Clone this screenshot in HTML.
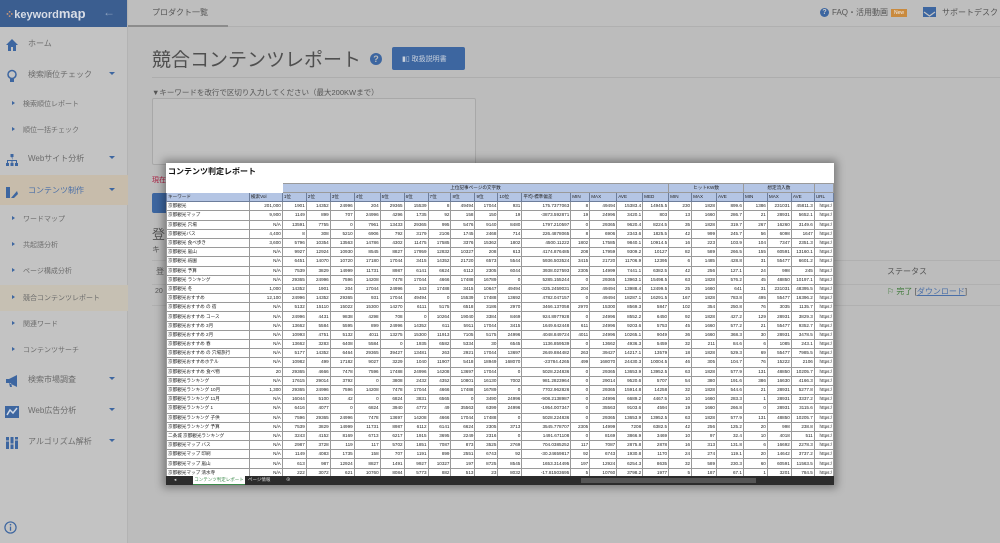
<!DOCTYPE html>
<html><head><meta charset="utf-8">
<style>
*{margin:0;padding:0;box-sizing:border-box}
body{width:1000px;height:543px;overflow:hidden;background:#bcbcbc;font-family:"Liberation Sans","Noto Sans CJK JP",sans-serif;color:#5e5e5e;position:relative}
.sb{position:absolute;left:0;top:0;width:128px;height:543px;background:#c3c3c3;border-right:1px solid #b3b3b3}
.logo{height:27px;background:#3b5e90;color:#d8dde6;font-size:11px;font-weight:bold;padding:6px 0 0 5px;position:relative}
.logo b{font-size:13px}
.logo .ar{position:absolute;right:12px;top:5px;color:#8ea2bf;font-size:12px;font-weight:normal}
.it{position:absolute;left:0;width:128px;font-size:8px;color:#6c6c6c}
.it .ic{position:absolute;left:5px;top:-5px;width:14px;height:14px}
.it .tx{position:absolute;left:28px;top:-5px}
.it .dd{position:absolute;left:109px;top:-2px;border-left:3px solid transparent;border-right:3px solid transparent;border-top:3px solid #3d66a0}
.sub .tx{left:23px;font-size:7px}
.sub .tri{position:absolute;left:12px;top:-3px;border-top:2.5px solid transparent;border-bottom:2.5px solid transparent;border-left:3px solid #3d66a0}
.hl{position:absolute;left:0;width:128px;background:#c7bcab}
.top{position:absolute;left:129px;top:0;right:0;height:27px;border-bottom:1px solid #b0b0b0;background:#bebebe}
.tab{position:absolute;left:152px;top:7px;font-size:8px;color:#555}
.tabu{position:absolute;left:128px;top:25px;width:100px;height:2px;background:#8c8c8c}
.main{position:absolute}
.sheet{position:absolute;left:166px;top:163px;width:668px;height:322px;background:#fff;box-shadow:0 0 8px 3px rgba(0,0,0,.35);overflow:hidden}
table{border-collapse:collapse;table-layout:fixed;font-size:4.6px;position:absolute;left:0;top:0}
td{border:0.5px solid #9a9a9a;height:9.2px;overflow:hidden;white-space:nowrap;text-align:right;padding:0 1px;color:#222;line-height:8px}
td.k{text-align:left}
tr.h td{background:#b4c5e4;text-align:left;border-color:#6d7e9c}
.gh td{background:#b4c5e4;text-align:center;height:9px}
.bar{position:absolute;left:0;top:313px;width:668px;height:9px;background:#2c2c2c;font-size:4.5px;color:#ddd}
</style></head><body>

<div class="sb">
 <div class="logo"><span style="color:#c97">⁘</span>keyword<b>map</b><span class="ar">←</span></div>
 <div class="hl" style="top:175px;height:30px"></div>
 <div class="hl" style="top:285px;height:26px;background:#c6c0b3"></div>
 <div class="it" style="top:43px"><svg class="ic" viewBox="0 0 14 14"><path d="M1 7 L7 1 L13 7 L11 7 L11 13 L8 13 L8 9 L6 9 L6 13 L3 13 L3 7Z" fill="#3d66a0"/></svg><span class="tx">ホーム</span></div>
 <div class="it" style="top:74px"><svg class="ic" viewBox="0 0 14 14"><circle cx="7" cy="5.5" r="4" fill="none" stroke="#3d66a0" stroke-width="1.5"/><rect x="5" y="10" width="4" height="3" fill="#3d66a0"/></svg><span class="tx">検索順位チェック</span><span class="dd"></span></div>
 <div class="it sub" style="top:104px"><span class="tri"></span><span class="tx">検索順位レポート</span></div>
 <div class="it sub" style="top:130px"><span class="tri"></span><span class="tx">順位一括チェック</span></div>
 <div class="it" style="top:158px"><svg class="ic" viewBox="0 0 14 14"><path d="M5.5 1h3v3h-3zM6.5 4h1v3H2v3h1V8h3.5v2h1V8H11v2h1V7H7.5z M1 10h3v3H1zM5.5 10h3v3h-3zM10 10h3v3h-3z" fill="#3d66a0"/></svg><span class="tx">Webサイト分析</span><span class="dd"></span></div>
 <div class="it" style="top:190px"><svg class="ic" viewBox="0 0 14 14"><path d="M1 2h4v11H1zM6 13 L12 6 L13 9 L9 13Z" fill="#3d66a0"/></svg><span class="tx" style="color:#4a6fa8">コンテンツ制作</span><span class="dd"></span></div>
 <div class="it sub" style="top:219px"><span class="tri"></span><span class="tx">ワードマップ</span></div>
 <div class="it sub" style="top:245px"><span class="tri"></span><span class="tx">共起語分析</span></div>
 <div class="it sub" style="top:271px"><span class="tri"></span><span class="tx">ページ構成分析</span></div>
 <div class="it sub" style="top:298px"><span class="tri"></span><span class="tx">競合コンテンツレポート</span></div>
 <div class="it sub" style="top:324px"><span class="tri"></span><span class="tx">関連ワード</span></div>
 <div class="it sub" style="top:350px"><span class="tri"></span><span class="tx">コンテンツサーチ</span></div>
 <div class="it" style="top:379px"><svg class="ic" viewBox="0 0 14 14"><path d="M1 5h3l8-4v12L4 9H1zM4 9l1 4h2L6 9z" fill="#3d66a0"/></svg><span class="tx">検索市場調査</span><span class="dd"></span></div>
 <div class="it" style="top:410px"><svg class="ic" viewBox="0 0 14 14"><rect x="0" y="1" width="14" height="12" fill="#3d66a0"/><path d="M2 10 L5 5 L8 8 L12 3" stroke="#cfd8e6" stroke-width="1.5" fill="none"/></svg><span class="tx">Web広告分析</span><span class="dd"></span></div>
 <div class="it" style="top:441px"><svg class="ic" viewBox="0 0 14 14"><path d="M1 1h3v12H1zM5.5 1h3v12h-3zM10 1h3v12h-3z" fill="#3d66a0"/><path d="M1 5h3M5.5 8h3M10 4h3" stroke="#c3c3c3"/></svg><span class="tx">アルゴリズム解析</span><span class="dd"></span></div>
 <svg style="position:absolute;left:4px;top:521px" width="13" height="13" viewBox="0 0 14 14"><circle cx="7" cy="7" r="6" fill="none" stroke="#3d66a0" stroke-width="1.3"/><rect x="6.3" y="6" width="1.4" height="4.5" fill="#3d66a0"/><circle cx="7" cy="4" r=".9" fill="#3d66a0"/></svg>
</div>

<div class="top"></div>
<div class="tab">プロダクト一覧</div>
<div class="tabu"></div>
<div class="main" style="left:820px;top:7px;font-size:8px;color:#555;display:flex;align-items:center;gap:3px">
 <span style="display:inline-block;width:9px;height:9px;border-radius:50%;background:#3d66a0;color:#ccc;font-size:7px;text-align:center;line-height:9px;font-weight:bold">?</span>FAQ・活用動画<span style="background:#c98a3e;color:#eee;font-size:5px;padding:1px 3px">New</span>
</div>
<div class="main" style="left:923px;top:7px;width:13px;height:10px;background:#3d66a0"><svg width="13" height="10"><path d="M1 2 L6.5 6 L12 2" stroke="#c3c3c3" fill="none" stroke-width="1.2"/></svg></div>
<div class="main" style="left:942px;top:7px;font-size:8px;color:#555">サポートデスク</div>

<div class="main" style="left:152px;top:45px;font-size:19px;color:#4f4f4f;white-space:nowrap">競合コンテンツレポート</div>
<div class="main" style="left:370px;top:53px;width:12px;height:12px;border-radius:50%;background:#3d66a0;color:#bbb;font-size:9px;font-weight:bold;text-align:center;line-height:12px">?</div>
<div class="main" style="left:392px;top:47px;width:73px;height:23px;background:#3d66a0;border-radius:2px;color:#c8d0dc;font-size:7px;padding:7px 0 0 10px">▮▯ 取扱説明書</div>
<div class="main" style="left:152px;top:77px;width:848px;height:1px;background:#adadad"></div>
<div class="main" style="left:152px;top:87px;font-size:7.5px;color:#555">▼キーワードを改行で区切り入力してください（最大200KWまで）</div>
<div class="main" style="left:152px;top:98px;width:324px;height:67px;border:1px solid #a8a8a8;border-radius:2px;background:#c0c0c0"></div>
<div class="main" style="left:152px;top:175px;font-size:7px;color:#a24">現在</div>
<div class="main" style="left:152px;top:193px;width:20px;height:20px;background:#3d66a0;border-radius:2px"></div>
<div class="main" style="left:152px;top:224px;font-size:13px;color:#555">登</div>
<div class="main" style="left:152px;top:244px;font-size:8px;color:#555">キ</div>
<div class="main" style="left:152px;top:260px;width:848px;height:1px;background:#b0b0b0"></div>
<div class="main" style="left:152px;top:284px;width:848px;height:1px;background:#b0b0b0"></div>
<div class="main" style="left:152px;top:305px;width:848px;height:1px;background:#b0b0b0"></div>
<div class="main" style="left:887px;top:266px;font-size:8px;color:#555">ステータス</div>
<div class="main" style="left:156px;top:266px;font-size:8px;color:#555">登</div>
<div class="main" style="left:155px;top:288px;font-size:7px;color:#555">20</div>
<div class="main" style="left:887px;top:286px;font-size:8px;color:#555"><span style="color:#3f7a3a">⚐ 完了</span> [<span style="text-decoration:underline;color:#4a6fa8">ダウンロード</span>]</div>

<div class="sheet">
<div style="position:absolute;left:2px;top:3px;font-size:8px;font-weight:bold;color:#111">コンテンツ判定レポート</div>
<table style="top:20px">
<colgroup><col style="width:83px"><col style="width:33px"><col style="width:24px"><col style="width:24px"><col style="width:24px"><col style="width:26px"><col style="width:24px"><col style="width:24px"><col style="width:23px"><col style="width:24px"><col style="width:23px"><col style="width:24px"><col style="width:49px"><col style="width:19px"><col style="width:27px"><col style="width:26px"><col style="width:26px"><col style="width:23px"><col style="width:25px"><col style="width:27px"><col style="width:24px"><col style="width:24px"><col style="width:23px"><col style="width:19px"></colgroup>
<tr class="gh"><td style="background:#fff;border-color:#fff"></td><td style="background:#fff;border-color:#fff"></td><td colspan="15">上位記事ページの文字数</td><td colspan="3">ヒットKW数</td><td colspan="3">想定流入数</td><td></td></tr>
<tr class="h"><td>キーワード</td><td>検索Vol</td><td>1位</td><td>2位</td><td>3位</td><td>4位</td><td>5位</td><td>6位</td><td>7位</td><td>8位</td><td>9位</td><td>10位</td><td>平均-標準偏差</td><td>MIN</td><td>MAX</td><td>AVE</td><td>MED</td><td>MIN</td><td>MAX</td><td>AVE</td><td>MIN</td><td>MAX</td><td>AVE</td><td>URL</td></tr>
<tr><td class="k">京都観光</td><td>201,000</td><td>1901</td><td>14352</td><td>24996</td><td>204</td><td>29365</td><td>15539</td><td>8</td><td>49494</td><td>17044</td><td>931</td><td>175.7377063</td><td>8</td><td>49494</td><td>15383.4</td><td>14945.5</td><td>230</td><td>1828</td><td>899.6</td><td>1386</td><td>231031</td><td>45811.3</td><td>https:/</td></tr>
<tr><td class="k">京都観光マップ</td><td>9,900</td><td>1149</td><td>899</td><td>707</td><td>24996</td><td>4296</td><td>1735</td><td>92</td><td>158</td><td>150</td><td>19</td><td>-3873.592871</td><td>19</td><td>24996</td><td>3420.1</td><td>803</td><td>13</td><td>1660</td><td>286.7</td><td>21</td><td>28931</td><td>5652.1</td><td>https:/</td></tr>
<tr><td class="k">京都観光 穴場</td><td>N/A</td><td>13591</td><td>7755</td><td>0</td><td>7961</td><td>13433</td><td>29365</td><td>995</td><td>5476</td><td>9140</td><td>8480</td><td>1797.210597</td><td>0</td><td>29365</td><td>9620.4</td><td>8224.5</td><td>35</td><td>1828</td><td>319.7</td><td>267</td><td>16260</td><td>3149.6</td><td>https:/</td></tr>
<tr><td class="k">京都観光バス</td><td>4,400</td><td>8</td><td>308</td><td>5210</td><td>6906</td><td>792</td><td>3179</td><td>2106</td><td>1745</td><td>2468</td><td>714</td><td>226.4878065</td><td>8</td><td>6906</td><td>2343.6</td><td>1825.5</td><td>42</td><td>999</td><td>245.7</td><td>56</td><td>6098</td><td>1647</td><td>https:/</td></tr>
<tr><td class="k">京都観光 食べ歩き</td><td>3,600</td><td>5796</td><td>10354</td><td>13563</td><td>14786</td><td>4302</td><td>11475</td><td>17585</td><td>3376</td><td>15362</td><td>1802</td><td>4500.11222</td><td>1802</td><td>17585</td><td>9840.1</td><td>10914.5</td><td>16</td><td>223</td><td>103.9</td><td>104</td><td>7347</td><td>2351.3</td><td>https:/</td></tr>
<tr><td class="k">京都観光 嵐山</td><td>N/A</td><td>9927</td><td>12924</td><td>10930</td><td>8545</td><td>8827</td><td>17959</td><td>12832</td><td>10327</td><td>208</td><td>613</td><td>4174.876485</td><td>208</td><td>17959</td><td>9309.2</td><td>10127</td><td>82</td><td>589</td><td>266.5</td><td>155</td><td>60591</td><td>13160.1</td><td>https:/</td></tr>
<tr><td class="k">京都観光 祇園</td><td>N/A</td><td>6451</td><td>14070</td><td>10720</td><td>17180</td><td>17044</td><td>3415</td><td>14352</td><td>21720</td><td>6573</td><td>5544</td><td>5936.503524</td><td>3415</td><td>21720</td><td>11706.9</td><td>12395</td><td>6</td><td>1485</td><td>428.8</td><td>31</td><td>55477</td><td>6601.2</td><td>https:/</td></tr>
<tr><td class="k">京都観光 予算</td><td>N/A</td><td>7539</td><td>3829</td><td>14999</td><td>11731</td><td>8987</td><td>6141</td><td>6624</td><td>6112</td><td>2305</td><td>6044</td><td>3938.027593</td><td>2305</td><td>14999</td><td>7441.1</td><td>6382.5</td><td>42</td><td>256</td><td>127.1</td><td>24</td><td>998</td><td>245</td><td>https:/</td></tr>
<tr><td class="k">京都観光 ランキング</td><td>N/A</td><td>29365</td><td>24996</td><td>7596</td><td>14208</td><td>7478</td><td>17044</td><td>4666</td><td>17488</td><td>16789</td><td>0</td><td>5285.155244</td><td>0</td><td>29365</td><td>13963.1</td><td>15498.5</td><td>63</td><td>1828</td><td>576.2</td><td>45</td><td>48850</td><td>10197.1</td><td>https:/</td></tr>
<tr><td class="k">京都観光 冬</td><td>1,000</td><td>14352</td><td>1901</td><td>204</td><td>17044</td><td>24996</td><td>343</td><td>17488</td><td>3415</td><td>10647</td><td>49494</td><td>-325.2459031</td><td>204</td><td>49494</td><td>13988.4</td><td>12499.5</td><td>25</td><td>1660</td><td>641</td><td>31</td><td>231031</td><td>48395.5</td><td>https:/</td></tr>
<tr><td class="k">京都観光おすすめ</td><td>12,100</td><td>24996</td><td>14352</td><td>29365</td><td>931</td><td>17044</td><td>49494</td><td>0</td><td>15539</td><td>17488</td><td>13692</td><td>4782.047157</td><td>0</td><td>49494</td><td>18287.1</td><td>16291.5</td><td>167</td><td>1828</td><td>783.8</td><td>495</td><td>55477</td><td>16396.2</td><td>https:/</td></tr>
<tr><td class="k">京都観光おすすめ の 宿</td><td>N/A</td><td>5132</td><td>15110</td><td>15022</td><td>15300</td><td>14270</td><td>6111</td><td>5175</td><td>6518</td><td>3186</td><td>2970</td><td>3466.137058</td><td>2970</td><td>15300</td><td>8569.3</td><td>5847</td><td>102</td><td>354</td><td>250.8</td><td>76</td><td>3035</td><td>1135.7</td><td>https:/</td></tr>
<tr><td class="k">京都観光おすすめ コース</td><td>N/A</td><td>24996</td><td>4431</td><td>9838</td><td>4298</td><td>708</td><td>0</td><td>10264</td><td>19040</td><td>3384</td><td>8469</td><td>924.8977928</td><td>0</td><td>24996</td><td>8552.2</td><td>6450</td><td>92</td><td>1828</td><td>427.2</td><td>129</td><td>28931</td><td>3829.3</td><td>https:/</td></tr>
<tr><td class="k">京都観光おすすめ 3月</td><td>N/A</td><td>13662</td><td>5584</td><td>5595</td><td>899</td><td>24996</td><td>14352</td><td>611</td><td>5911</td><td>17044</td><td>3415</td><td>1649.642448</td><td>611</td><td>24996</td><td>9203.6</td><td>5753</td><td>45</td><td>1660</td><td>577.2</td><td>21</td><td>55477</td><td>9352.7</td><td>https:/</td></tr>
<tr><td class="k">京都観光おすすめ 2月</td><td>N/A</td><td>10993</td><td>4751</td><td>5132</td><td>4011</td><td>13275</td><td>15300</td><td>11913</td><td>7105</td><td>5175</td><td>24996</td><td>4048.849724</td><td>4011</td><td>24996</td><td>10265.1</td><td>9049</td><td>36</td><td>1660</td><td>368.3</td><td>30</td><td>28931</td><td>3478.5</td><td>https:/</td></tr>
<tr><td class="k">京都観光おすすめ 春</td><td>N/A</td><td>13662</td><td>3283</td><td>6408</td><td>5584</td><td>0</td><td>1935</td><td>6582</td><td>5334</td><td>30</td><td>6545</td><td>1136.859539</td><td>0</td><td>13662</td><td>4936.3</td><td>5459</td><td>32</td><td>211</td><td>84.6</td><td>6</td><td>1085</td><td>243.1</td><td>https:/</td></tr>
<tr><td class="k">京都観光おすすめ の 穴場旅行</td><td>N/A</td><td>5177</td><td>14352</td><td>6464</td><td>29365</td><td>39427</td><td>13481</td><td>263</td><td>2921</td><td>17044</td><td>13697</td><td>2649.884482</td><td>263</td><td>39427</td><td>14217.1</td><td>13579</td><td>18</td><td>1828</td><td>529.3</td><td>69</td><td>55477</td><td>7985.5</td><td>https:/</td></tr>
<tr><td class="k">京都観光おすすめホテル</td><td>N/A</td><td>10982</td><td>499</td><td>17182</td><td>9027</td><td>3229</td><td>1040</td><td>11907</td><td>5418</td><td>18949</td><td>168070</td><td>-23784.4265</td><td>499</td><td>168070</td><td>24430.3</td><td>10004.5</td><td>46</td><td>305</td><td>104.7</td><td>76</td><td>15222</td><td>2106</td><td>https:/</td></tr>
<tr><td class="k">京都観光おすすめ 食べ物</td><td>20</td><td>29365</td><td>4666</td><td>7478</td><td>7596</td><td>17488</td><td>24996</td><td>14208</td><td>13697</td><td>17044</td><td>0</td><td>5028.224836</td><td>0</td><td>29365</td><td>13653.9</td><td>13952.5</td><td>63</td><td>1828</td><td>577.9</td><td>131</td><td>48850</td><td>10205.7</td><td>https:/</td></tr>
<tr><td class="k">京都観光ランキング</td><td>N/A</td><td>17615</td><td>29014</td><td>3792</td><td>0</td><td>3808</td><td>2432</td><td>4352</td><td>10801</td><td>16130</td><td>7002</td><td>981.2823964</td><td>0</td><td>29014</td><td>9520.6</td><td>5707</td><td>54</td><td>380</td><td>191.6</td><td>386</td><td>16630</td><td>4166.3</td><td>https:/</td></tr>
<tr><td class="k">京都観光ランキング 10月</td><td>1,300</td><td>29365</td><td>24996</td><td>7596</td><td>14208</td><td>7478</td><td>17044</td><td>4666</td><td>17488</td><td>16789</td><td>0</td><td>7702.962826</td><td>0</td><td>29365</td><td>15914.8</td><td>14258</td><td>32</td><td>1828</td><td>544.6</td><td>21</td><td>28931</td><td>5277.8</td><td>https:/</td></tr>
<tr><td class="k">京都観光ランキング 11月</td><td>N/A</td><td>16044</td><td>5100</td><td>42</td><td>0</td><td>6824</td><td>3831</td><td>6565</td><td>0</td><td>3490</td><td>24996</td><td>-908.2138987</td><td>0</td><td>24996</td><td>6689.2</td><td>4467.5</td><td>10</td><td>1660</td><td>283.3</td><td>1</td><td>28931</td><td>3337.2</td><td>https:/</td></tr>
<tr><td class="k">京都観光ランキング 1</td><td>N/A</td><td>6416</td><td>4077</td><td>0</td><td>6824</td><td>3940</td><td>4772</td><td>49</td><td>35563</td><td>6399</td><td>24996</td><td>-1954.007347</td><td>0</td><td>35563</td><td>9103.6</td><td>4594</td><td>19</td><td>1660</td><td>266.8</td><td>0</td><td>28931</td><td>3115.6</td><td>https:/</td></tr>
<tr><td class="k">京都観光ランキング 子供</td><td>N/A</td><td>7596</td><td>29365</td><td>24996</td><td>7478</td><td>13697</td><td>14208</td><td>4666</td><td>17044</td><td>17488</td><td>0</td><td>5028.224836</td><td>0</td><td>29365</td><td>13653.9</td><td>13952.5</td><td>63</td><td>1828</td><td>577.9</td><td>131</td><td>48850</td><td>10205.7</td><td>https:/</td></tr>
<tr><td class="k">京都観光ランキング 予算</td><td>N/A</td><td>7539</td><td>3829</td><td>14999</td><td>11731</td><td>8987</td><td>6112</td><td>6141</td><td>6624</td><td>2305</td><td>3713</td><td>3545.778707</td><td>2305</td><td>14999</td><td>7208</td><td>6382.5</td><td>42</td><td>256</td><td>125.2</td><td>20</td><td>998</td><td>238.8</td><td>https:/</td></tr>
<tr><td class="k">二条城 京都観光ランキング</td><td>N/A</td><td>3243</td><td>4152</td><td>8169</td><td>6713</td><td>6217</td><td>1915</td><td>3695</td><td>2249</td><td>2316</td><td>0</td><td>1491.671108</td><td>0</td><td>8169</td><td>3866.9</td><td>3469</td><td>10</td><td>97</td><td>32.4</td><td>10</td><td>4018</td><td>511</td><td>https:/</td></tr>
<tr><td class="k">京都観光マップ バス</td><td>N/A</td><td>2987</td><td>3728</td><td>119</td><td>117</td><td>5702</td><td>1851</td><td>7087</td><td>873</td><td>3525</td><td>2769</td><td>704.0385252</td><td>117</td><td>7087</td><td>2875.8</td><td>2878</td><td>16</td><td>313</td><td>131.8</td><td>6</td><td>16692</td><td>2278.3</td><td>https:/</td></tr>
<tr><td class="k">京都観光マップ 印刷</td><td>N/A</td><td>1149</td><td>4083</td><td>1735</td><td>158</td><td>707</td><td>1191</td><td>899</td><td>2551</td><td>6743</td><td>92</td><td>-30.24659817</td><td>92</td><td>6743</td><td>1930.8</td><td>1170</td><td>24</td><td>274</td><td>119.1</td><td>20</td><td>14642</td><td>3737.2</td><td>https:/</td></tr>
<tr><td class="k">京都観光マップ 嵐山</td><td>N/A</td><td>613</td><td>987</td><td>12924</td><td>8827</td><td>1491</td><td>9927</td><td>10327</td><td>197</td><td>8725</td><td>8545</td><td>1653.314495</td><td>197</td><td>12924</td><td>6254.3</td><td>8635</td><td>32</td><td>589</td><td>230.3</td><td>60</td><td>60591</td><td>11563.5</td><td>https:/</td></tr>
<tr><td class="k">京都観光マップ 清水寺</td><td>N/A</td><td>222</td><td>3072</td><td>621</td><td>10760</td><td>8084</td><td>5773</td><td>882</td><td>513</td><td>23</td><td>8032</td><td>-17.81503695</td><td>5</td><td>10760</td><td>3798.2</td><td>1977</td><td>5</td><td>187</td><td>67.1</td><td>1</td><td>3201</td><td>784.5</td><td>https:/</td></tr>
</table>
<div class="bar"><span style="position:absolute;left:8px;top:1px">◂</span><span style="position:absolute;left:27px;top:0;width:52px;height:9px;background:#fff;color:#3a8a4a;text-align:center;line-height:8px;border-bottom:1px solid #3a8a4a">コンテンツ判定レポート</span><span style="position:absolute;left:82px;top:1px">ページ情報</span><span style="position:absolute;left:120px;top:1px">⊕</span><span style="position:absolute;left:415px;top:2px;width:175px;height:5px;background:#555"></span></div>
</div>
</body></html>
